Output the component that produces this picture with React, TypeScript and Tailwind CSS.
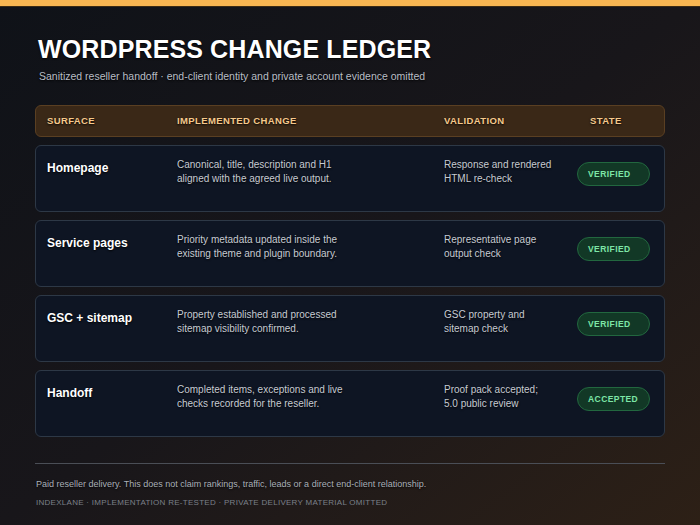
import React from "react";

/* =======================
   DATA
======================= */
interface LedgerRow {
  surface: string;
  change: string[];
  validation: string[];
  state: string;
}

const rows: LedgerRow[] = [
  {
    surface: "Homepage",
    change: ["Canonical, title, description and H1", "aligned with the agreed live output."],
    validation: ["Response and rendered", "HTML re-check"],
    state: "VERIFIED",
  },
  {
    surface: "Service pages",
    change: ["Priority metadata updated inside the", "existing theme and plugin boundary."],
    validation: ["Representative page", "output check"],
    state: "VERIFIED",
  },
  {
    surface: "GSC + sitemap",
    change: ["Property established and processed", "sitemap visibility confirmed."],
    validation: ["GSC property and", "sitemap check"],
    state: "VERIFIED",
  },
  {
    surface: "Handoff",
    change: ["Completed items, exceptions and live", "checks recorded for the reseller."],
    validation: ["Proof pack accepted;", "5.0 public review"],
    state: "ACCEPTED",
  },
];

const shadow = "[text-shadow:0_1px_2px_rgba(0,0,0,0.9)]";

/* =======================
   COMPONENT
======================= */
export default function App() {
  return (
    <div
      className="w-[700px] h-[525px] overflow-hidden bg-gradient-to-br from-[#0f1218] via-[#18161a] to-[#2d2016] flex flex-col"
      style={{ fontFamily: '"Liberation Sans", Arial, sans-serif' }}
    >
      <div className="h-[7px] bg-[#f8b652] border-b border-[#3a2a14] shrink-0" />

      <div className="px-[35px] flex flex-col">
        <h1
          className={`mt-[25px] ml-[3px] text-[25px] leading-[34px] font-bold text-white tracking-[0.005em] ${shadow}`}
        >
          WORDPRESS CHANGE LEDGER
        </h1>
        <p className={`mt-[3px] ml-[4px] text-[10.5px] leading-[14px] text-[#b9bec6] ${shadow}`}>
          Sanitized reseller handoff · end-client identity and private account evidence omitted
        </p>

        {/* header */}
        <div className="mt-[22px] h-[32px] rounded-md bg-[#3a2817] border border-[#5a3f22] flex items-center text-[9.5px] font-bold tracking-[0.04em] text-[#f6c98c]">
          <span className={`w-[141px] pl-[11px] ${shadow}`}>SURFACE</span>
          <span className={`w-[267px] ${shadow}`}>IMPLEMENTED CHANGE</span>
          <span className={`w-[146px] ${shadow}`}>VALIDATION</span>
          <span className={shadow}>STATE</span>
        </div>

        {/* rows */}
        <div className="mt-[8px] flex flex-col gap-[8px]">
          {rows.map((r) => (
            <div
              key={r.surface}
              className="h-[67px] rounded-md bg-[#0e1523] border border-[#2d3846] flex items-start"
            >
              <div
                className={`w-[141px] pl-[11px] pt-[14px] text-[12px] leading-[16px] font-bold text-white ${shadow}`}
              >
                {r.surface}
              </div>
              <div className={`w-[267px] pt-[12px] text-[10px] leading-[14px] text-[#c6cbd3] ${shadow}`}>
                {r.change.map((l) => (
                  <div key={l}>{l}</div>
                ))}
              </div>
              <div className={`w-[133px] pt-[12px] text-[10px] leading-[14px] text-[#c6cbd3] ${shadow}`}>
                {r.validation.map((l) => (
                  <div key={l}>{l}</div>
                ))}
              </div>
              <div className="pt-[16px]">
                <span className="flex items-center w-[73px] h-[24px] pl-[10px] rounded-full bg-[#123826] border border-[#22673f] text-[8.5px] font-bold tracking-[0.05em] text-[#7de6a6]">
                  {r.state}
                </span>
              </div>
            </div>
          ))}
        </div>

        {/* footer */}
        <div className="mt-[26px] h-px bg-[#4a4e56]" />
        <p className={`mt-[14px] ml-[1px] text-[9px] leading-[12px] text-[#aab0b8] ${shadow}`}>
          Paid reseller delivery. This does not claim rankings, traffic, leads or a direct end-client relationship.
        </p>
        <p className="mt-[8px] ml-[1px] text-[8px] leading-[10px] tracking-[0.035em] text-[#7b8089]">
          INDEXLANE · IMPLEMENTATION RE-TESTED · PRIVATE DELIVERY MATERIAL OMITTED
        </p>
      </div>
    </div>
  );
}
